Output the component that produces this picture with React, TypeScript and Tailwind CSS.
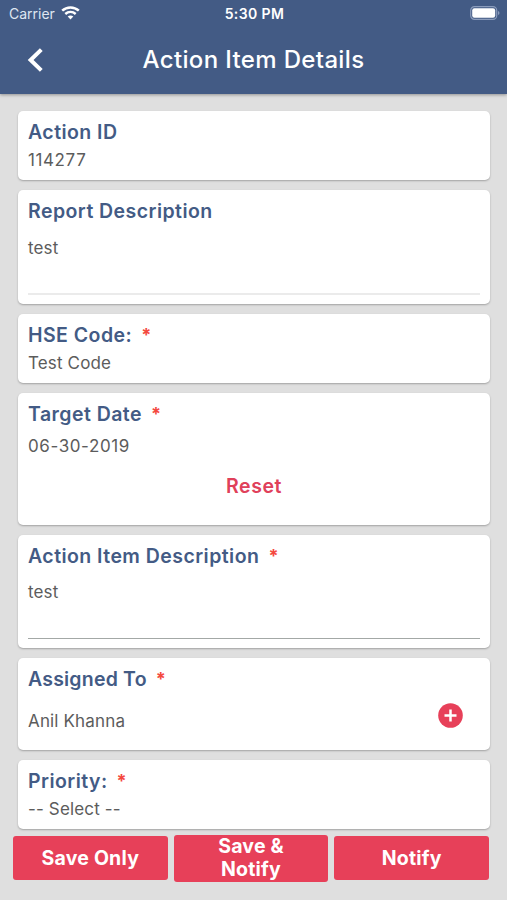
import React from 'react'

type CardProps = {
  title: string
  required?: boolean
  tracking?: string
  className: string
  children: React.ReactNode
}

const classes = {
  text: 'text-[17px] leading-5 tracking-[0.15px] text-[#5c5c5c]',
  digits: 'text-[17px] leading-5 tracking-[0.6px] text-[#5c5c5c]',
  button:
    'flex items-center justify-center text-center rounded-[3px] bg-[#e74059] text-white text-[19.5px] leading-[23px] font-bold tracking-[0.2px]',
}

function StatusBar() {
  return (
    <div className="grid grid-cols-3 items-center h-[27px] pl-[9px] pr-[7px] text-[14px]">
      <div className="flex items-center gap-[6px] text-[#dfe6f1]">
        <span className="w-[46px]">Carrier</span>
        <svg
          className="mb-px"
          width="19"
          height="14"
          viewBox="0 0 19 14"
          fill="none"
        >
          <path
            d="M1.2 4.7C5.9.3 13.1.3 17.8 4.7"
            stroke="#fff"
            strokeWidth="2.5"
          />
          <path
            d="M4.3 8C7.3 5.2 11.7 5.2 14.7 8"
            stroke="#fff"
            strokeWidth="2.4"
          />
          <path d="M6.7 10.6C8.3 9.1 10.7 9.1 12.3 10.6L9.5 13.5Z" fill="#fff" />
        </svg>
      </div>
      <div className="text-center font-semibold text-white tracking-[0.4px]">
        5:30 PM
      </div>
      <svg
        className="justify-self-end mb-px"
        width="30"
        height="14"
        viewBox="0 0 30 14"
      >
        <rect
          x=".7"
          y=".6"
          width="26"
          height="12.8"
          rx="3.8"
          fill="none"
          stroke="#8b9cbc"
          strokeWidth="1.2"
        />
        <rect x="2.2" y="2.2" width="23" height="9.6" rx="2.2" fill="#fff" />
        <path d="M28 5C30 5.8 30 8.2 28 9Z" fill="#8b9cbc" />
      </svg>
    </div>
  )
}

function Header() {
  return (
    <header className="h-[94px] shrink-0 bg-[#435b85] shadow-[0_1px_3px_rgba(0,0,0,0.35)]">
      <StatusBar />
      <div className="grid grid-cols-[60px_1fr_60px] items-center h-[66px]">
        <button type="button" className="pl-[27px]">
          <svg width="17" height="26" viewBox="0 0 17 26" fill="none">
            <path d="M14.3 2.6L3.6 13L14.3 23.4" stroke="#fff" strokeWidth="4" />
          </svg>
        </button>
        <h1 className="text-center text-[24px] font-medium tracking-[0.35px] text-white">
          Action Item Details
        </h1>
      </div>
    </header>
  )
}

function Card({
  title,
  required,
  tracking = 'tracking-[0.45px]',
  className,
  children,
}: CardProps) {
  return (
    <section
      className={`flex flex-col rounded-[5px] bg-white px-[10px] pt-[9px] shadow-[0_1px_2px_rgba(0,0,0,0.28)] ${className}`}
    >
      <h2
        className={`flex h-[25px] text-[19.5px] leading-6 font-semibold text-[#435b85] ${tracking}`}
      >
        {title}
        {required && (
          <span className="ml-[9px] text-[18px] font-bold text-[#f4483e]">
            *
          </span>
        )}
      </h2>
      {children}
    </section>
  )
}

export default function App() {
  return (
    <div className="flex flex-col h-[900px] w-full overflow-hidden bg-[#dfdfdf] font-['Inter',sans-serif]">
      <Header />
      <main className="flex flex-col pl-[18px] pr-[17px] pt-[17px]">
        <Card title="Action ID" className="h-[69px] mb-[10px]">
          <p className={`mt-[5px] ${classes.digits}`}>114277</p>
        </Card>
        <Card title="Report Description" className="h-[113.5px] mb-[10px]">
          <p className={`mt-[14px] ${classes.text}`}>test</p>
          <div className="mt-[35px] h-[2px] bg-[#ebebeb]" />
        </Card>
        <Card title="HSE Code:" required className="h-[69px] mb-[10px]">
          <p className={`mt-[5px] ${classes.text}`}>Test Code</p>
        </Card>
        <Card title="Target Date" required className="h-[132px] mb-[10px]">
          <p className={`mt-[9px] ${classes.digits}`}>06-30-2019</p>
          <button
            type="button"
            className="mt-[18px] text-[19.5px] leading-6 font-semibold tracking-[0.6px] text-[#e0405a]"
          >
            Reset
          </button>
        </Card>
        <Card
          title="Action Item Description"
          required
          className="h-[113px] mb-[10px]"
        >
          <p className={`mt-[13px] ${classes.text}`}>test</p>
          <div className="mt-[36px] h-px bg-[#a3a8a6]" />
        </Card>
        <Card
          title="Assigned To"
          required
          tracking="tracking-[0.2px]"
          className="h-[92px] mb-[10px]"
        >
          <div className="flex items-start justify-between pr-[17px] mt-[11px]">
            <p className={`mt-[8px] ${classes.text}`}>Anil Khanna</p>
            <button type="button">
              <svg width="25" height="25" viewBox="0 0 25 25">
                <circle cx="12.5" cy="12.5" r="12.3" fill="#e74059" />
                <path
                  d="M12.5 6.5V18.5M6.5 12.5H18.5"
                  stroke="#fff"
                  strokeWidth="2.5"
                />
              </svg>
            </button>
          </div>
        </Card>
        <Card title="Priority:" required className="h-[69px]">
          <p className={`mt-[5px] ${classes.text}`}>-- Select --</p>
        </Card>
      </main>
      <footer className="flex items-center gap-[6px] pl-[13px] pr-[18px] mt-[6px]">
        <button type="button" className={`flex-1 h-11 ${classes.button}`}>
          Save Only
        </button>
        <button type="button" className={`flex-1 h-[47px] ${classes.button}`}>
          Save &amp;
          <br />
          Notify
        </button>
        <button type="button" className={`flex-1 h-11 ${classes.button}`}>
          Notify
        </button>
      </footer>
    </div>
  )
}
